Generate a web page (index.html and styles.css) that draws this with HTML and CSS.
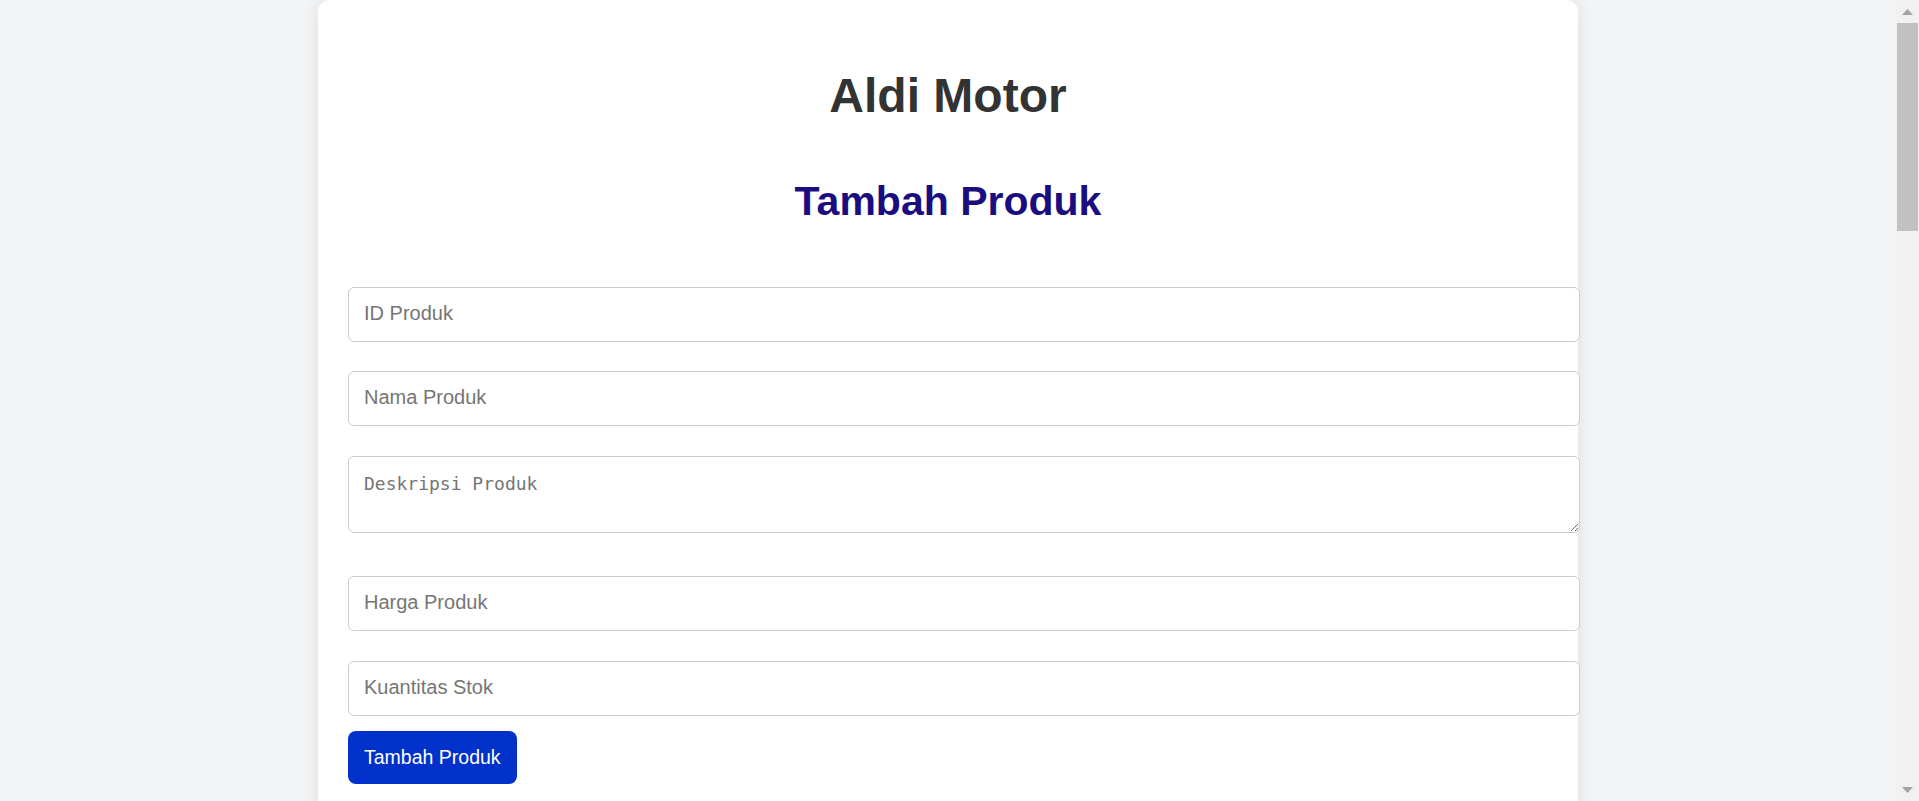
FILE: index.html
```html
<!DOCTYPE html>
<html lang="id">
<head>
<meta charset="utf-8">
<title>Aldi Motor - Tambah Produk</title>
<link rel="stylesheet" href="styles.css">
</head>
<body>
  <div class="page">
    <div class="viewport">
      <main class="card">
        <h1 class="brand">Aldi Motor</h1>
        <h2 class="page-title">Tambah Produk</h2>
        <form class="product-form">
          <input class="field gap-29" type="text" placeholder="ID Produk">
          <input class="field gap-30" type="text" placeholder="Nama Produk">
          <textarea class="field field-area gap-43" placeholder="Deskripsi Produk"></textarea>
          <input class="field gap-30" type="text" placeholder="Harga Produk">
          <input class="field gap-15" type="text" placeholder="Kuantitas Stok">
          <button class="submit-btn" type="button">Tambah Produk</button>
        </form>
      </main>
    </div>
    <div class="scrollbar" aria-hidden="true">
      <div class="sb-button">
        <svg width="11" height="6" viewBox="0 0 11 6"><path d="M0 6L5.5 0L11 6z" fill="#a3a3a3"/></svg>
      </div>
      <div class="sb-thumb"></div>
      <div class="sb-track"></div>
      <div class="sb-button">
        <svg width="11" height="6" viewBox="0 0 11 6"><path d="M0 0L5.5 6L11 0z" fill="#a3a3a3"/></svg>
      </div>
    </div>
  </div>
</body>
</html>
```

FILE: styles.css
```css
* {
  box-sizing: content-box;
}

html,
body {
  height: 100%;
  overflow: hidden;
}

body {
  margin: 0;
  background: #f3f4f6;
  font-family: "Liberation Sans", Arial, sans-serif;
  color: #333;
}

.page {
  display: flex;
  height: 100vh;
}

.viewport {
  flex: 1;
  min-width: 0;
  overflow: hidden;
  background: #f3f4f6;
}

.scrollbar {
  width: 23px;
  flex: none;
  display: flex;
  flex-direction: column;
  background: #f1f1f1;
}

.sb-button {
  height: 23px;
  flex: none;
  display: flex;
  align-items: center;
  justify-content: center;
}

.sb-thumb {
  height: 208px;
  flex: none;
  margin: 0 1px;
  background: #c1c1c1;
}

.sb-track {
  flex: 1;
}

.card {
  max-width: 1200px;
  margin: 0 auto;
  padding: 30px;
  min-height: 900px;
  background: #ffffff;
  border-radius: 12px;
  box-shadow: 0 0 20px rgba(0, 0, 0, 0.09);
}

.brand {
  margin: 38px 0 0;
  font-size: 48px;
  line-height: 56px;
  font-weight: 700;
  text-align: center;
  color: #333333;
}

.page-title {
  margin: 53px 0 0;
  font-size: 41px;
  line-height: 48px;
  font-weight: 700;
  text-align: center;
  color: #1a0d80;
}

.product-form {
  margin-top: 62px;
  display: flex;
  flex-direction: column;
  align-items: flex-start;
}

.field {
  display: block;
  width: 100%;
  margin: 0;
  padding: 14px 15px 16px;
  border: 1px solid #cccccc;
  border-radius: 6px;
  background: #ffffff;
  font-family: "Liberation Sans", Arial, sans-serif;
  font-size: 20px;
  line-height: 23px;
  color: #333;
  outline: none;
}

.field::placeholder {
  color: #757575;
}

.field-area {
  height: 44px;
  padding: 16px 15px 15px;
  font-family: "DejaVu Sans Mono", monospace;
  font-size: 18px;
  line-height: 22px;
}

.gap-15 { margin-bottom: 15px; }
.gap-29 { margin-bottom: 29px; }
.gap-30 { margin-bottom: 30px; }
.gap-43 { margin-bottom: 43px; }

.submit-btn {
  height: 53px;
  padding: 0 16px;
  border: none;
  border-radius: 8px;
  background: #0031cb;
  color: #ffffff;
  font-family: "Liberation Sans", Arial, sans-serif;
  font-size: 19.5px;
  cursor: pointer;
}
```
